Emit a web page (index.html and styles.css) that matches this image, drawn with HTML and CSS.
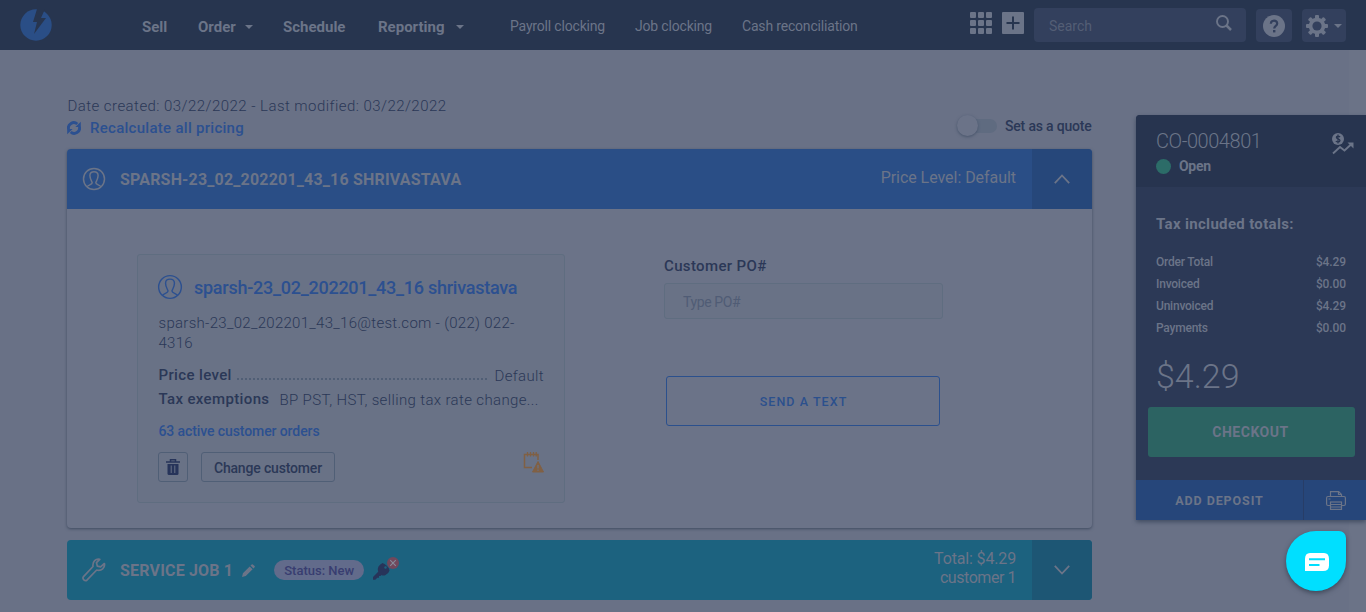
FILE: index.html
```html
<!DOCTYPE html>
<html lang="en">
<head>
<meta charset="utf-8">
<title>CO-0004801</title>
<link rel="stylesheet" href="styles.css">
</head>
<body>
<header class="nav">
  <svg class="logo" viewBox="0 0 32 32"><circle cx="16" cy="16" r="15.7" fill="#2a4e86"/><path d="M17 0 L13 13 L17 13 L14 25 L26 9 L21 9 L25 0 Z" fill="#27354f"/></svg>
  <nav class="menu">
    <a>Sell</a>
    <a>Order</a><i class="caret"></i>
    <a>Schedule</a>
    <a>Reporting</a><i class="caret"></i>
  </nav>
  <nav class="submenu">
    <a>Payroll clocking</a>
    <a>Job clocking</a>
    <a>Cash reconciliation</a>
  </nav>
  <div class="tools">
    <svg class="grid-icon" viewBox="0 0 22 22" fill="#6b7488"><rect width="6" height="6" rx="1"/><rect x="8" width="6" height="6" rx="1"/><rect x="16" width="6" height="6" rx="1"/><rect y="8" width="6" height="6" rx="1"/><rect x="8" y="8" width="6" height="6" rx="1"/><rect x="16" y="8" width="6" height="6" rx="1"/><rect y="16" width="6" height="6" rx="1"/><rect x="8" y="16" width="6" height="6" rx="1"/><rect x="16" y="16" width="6" height="6" rx="1"/></svg>
    <svg class="plus-icon" viewBox="0 0 22 22"><rect width="22" height="22" rx="1" fill="#6b7488"/><path d="M11 4.500v13M4.500 11h13" stroke="#27354f" stroke-width="2"/></svg>
    <div class="search"><span>Search</span>
      <svg width="16" height="16" viewBox="0 0 16 16" fill="none" stroke="#6b7488"><circle cx="6.500" cy="6.500" r="5.500" stroke-width="1.900"/><path d="M10.500 10.500L15 15" stroke-width="2.500"/></svg>
    </div>
    <div class="tool help"><svg width="22" height="22" viewBox="0 0 22 22"><circle cx="11" cy="11" r="11" fill="#6b7488"/><path d="M7.800 8.800C7.900 6.500 9.200 5.600 11 5.600c1.900 0 3.200 1.100 3.200 2.800 0 2.400-3 2.400-3 5" fill="none" stroke="#33405d" stroke-width="2.200"/><rect x="10" y="15" width="2.400" height="2.400" fill="#33405d"/></svg></div>
    <div class="tool gear"><svg width="22" height="22" viewBox="-11 -11 22 22"><g fill="#6b7488"><rect x="-2" y="-11" width="4" height="22" rx="1"/><rect x="-11" y="-2" width="22" height="4" rx="1"/><rect x="-2" y="-11" width="4" height="22" rx="1" transform="rotate(45)"/><rect x="-2" y="-11" width="4" height="22" rx="1" transform="rotate(-45)"/><circle r="8.300"/></g><circle r="4.600" fill="#33405d"/></svg><i class="caret"></i></div>
  </div>
</header>

<div class="page">
  <main class="main">
    <p class="dates">Date created: 03/22/2022 - Last modified: 03/22/2022</p>
    <div class="actions">
      <svg width="14" height="14" viewBox="0 0 14 14" fill="none" stroke="#2c5090" stroke-width="2.900"><path d="M1.600 8.200A5.300 5.300 0 0 1 10.300 3M12.400 5.800A5.300 5.300 0 0 1 3.700 11"/><path d="M13.800 .8V6H8.400ZM.2 13.200V8h5.400Z" fill="#2c5090" stroke="none"/></svg>
      <a class="recalc">Recalculate all pricing</a>
      <span class="toggle"><i class="knob"></i></span>
      <span class="quote">Set as a quote</span>
    </div>

    <section class="panel">
      <div class="bar bar-blue">
        <svg width="24" height="24" viewBox="0 0 24 24" fill="none" stroke="#6b7488" stroke-width="1.500"><circle cx="12" cy="12" r="10.500"/><path d="M5 19.800C6 17.700 10.200 17.800 10.200 15.800 10.200 14.500 7.900 12.500 7.900 8.500 7.900 5.900 9.500 4.700 12 4.700s4.100 1.200 4.100 3.800c0 4-2.300 6-2.300 7.300 0 2 4.200 1.900 5.200 4"/></svg>
        <h2 class="bar-title t-cust">SPARSH-23_02_202201_43_16 SHRIVASTAVA</h2>
        <div class="bar-info"><span class="t-level">Price Level: Default</span></div>
        <div class="chev"><svg width="16" height="10" viewBox="0 0 16 10"><path d="M.8 9.200L8 1.500l7.200 7.700" fill="none" stroke="#6b7488" stroke-width="1.800"/></svg></div>
      </div>
      <div class="panel-body">
        <article class="card">
          <div class="card-head">
            <svg width="26" height="26" viewBox="0 0 24 24" fill="none" stroke="#2c5090" stroke-width="1.300"><circle cx="12" cy="12" r="10.500"/><path d="M5 19.800C6 17.700 10.200 17.800 10.200 15.800 10.200 14.500 7.900 12.500 7.900 8.500 7.900 5.900 9.500 4.700 12 4.700s4.100 1.200 4.100 3.800c0 4-2.300 6-2.300 7.300 0 2 4.200 1.900 5.200 4"/></svg>
            <a class="t-name">sparsh-23_02_202201_43_16 shrivastava</a>
          </div>
          <p class="contact">sparsh-23_02_202201_43_16@test.com - (022) 022-<br>4316</p>
          <div class="row"><b class="t-pl">Price level</b><i class="dots"></i><span class="t-def">Default</span></div>
          <div class="row"><b class="t-tax">Tax exemptions</b><span class="t-bp">BP PST, HST, selling tax rate change...</span></div>
          <a class="orders">63 active customer orders</a>
          <div class="buttons">
            <span class="btn trash"><svg width="14" height="16" viewBox="0 0 14 16"><path d="M4.500 2.500V.8h5v1.700M0 3h14" fill="none" stroke="#27345a" stroke-width="1.500"/><path d="M1.500 5h11v9.500q0 1.500-1.500 1.500H3q-1.500 0-1.500-1.500Z" fill="#27345a"/><path d="M5.200 6.500v7.500M8.800 6.500v7.500" stroke="#697286" stroke-width="1"/></svg></span>
            <span class="btn change"><span>Change customer</span></span>
            <svg class="note" width="21" height="21" viewBox="0 0 21 21"><path d="M15 8V2.500H1.500v13H9" fill="none" stroke="#806044" stroke-width="1.500"/><path d="M4.500 0v4.500M7.500 0v4.500M10.500 0v4.500M13.200 0v4.500" stroke="#806044" stroke-width="1.300"/><path d="M15 9.500L20.500 20H9.500Z" fill="#806044" stroke="#806044" stroke-linejoin="round"/><path d="M15 13v3.500M15 17.500v1.300" stroke="#697286" stroke-width="1.300"/></svg>
          </div>
        </article>
        <div class="po">
          <label class="t-po">Customer PO#</label>
          <div class="input"><span>Type PO#</span></div>
          <div class="send"><span>SEND A TEXT</span></div>
        </div>
      </div>
    </section>

    <section class="bar bar-teal">
      <svg class="wrench" width="24" height="24" viewBox="0 0 24 24" fill="none" stroke="#6b7488" stroke-width="1.700" stroke-linejoin="round"><path d="M17.800 1.300C13.800.4 10.300 3.500 11 8.500L1.300 18.800c-1.200 2.200 1.500 4.700 3.600 3.400L14.700 12c4.800 1.300 8.600-2.300 7.700-6.500l-3.800 3.400-3.300-.8-.8-3.400Z"/></svg>
      <h2 class="bar-title t-job">SERVICE JOB 1</h2>
      <svg class="pencil" width="13" height="13" viewBox="0 0 13 13" fill="#6b7488"><path d="M0 13l.9-3.800L7.700 2.400l2.900 2.900-6.800 6.800ZM8.500 1.600L9.700.4Q10.300-.1 10.900.4L12.600 2.100q.5.600 0 1.200l-1.200 1.200Z"/></svg>
      <span class="status"><span>Status: New</span></span>
      <span class="key"><svg width="17" height="17" viewBox="0 0 17 17"><path d="M9.500 0Q11.500.5 13.500 2.500 16.500 5 16.500 7.500 15.500 11 12.500 12 10.500 13 8.500 12L7.500 13H6v1.700H4.300L2.300 16.800H0V14L5.200 8.800Q4 6 5.500 3.500 7 1 9.500 0Z" fill="#27345a"/><circle cx="12.500" cy="4.500" r="1.200" fill="#1c627f"/></svg>
        <svg class="key-x" width="12" height="12" viewBox="0 0 12 12"><circle cx="6" cy="6" r="6" fill="#70485c"/><path d="M3.200 3.200l5.600 5.600M8.800 3.200L3.200 8.800" stroke="#858a9a" stroke-width="1.100"/></svg></span>
      <div class="bar-info"><span class="t-total">Total: $4.29</span><span class="t-c1">customer 1</span></div>
      <div class="chev"><svg width="16" height="10" viewBox="0 0 16 10"><path d="M.8 .8L8 8.500 15.200 .8" fill="none" stroke="#6b7488" stroke-width="1.800"/></svg></div>
    </section>
  </main>

  <aside class="side">
    <div class="side-head">
      <div><div class="t-co">CO-0004801</div>
        <div class="open"><i></i><b>Open</b></div></div>
      <svg width="22" height="22" viewBox="0 0 22 22"><circle cx="6" cy="6" r="6" fill="#6b7488"/><path d="M8.200 3.900Q6 2.500 4.500 3.800C3.600 5.800 8 5.500 8 7.500 7.500 9.500 5 9.200 3.800 8.100M6 1.500v9" fill="none" stroke="#27344f" stroke-width="1.200"/><path d="M1 20.500L8 14l4.500 3.500L19 11.500" fill="none" stroke="#6b7488" stroke-width="1.900"/><path d="M15.500 9.500H21.500V15.500Z" fill="#6b7488"/></svg>
    </div>
    <div class="side-body">
      <h3 class="t-tot">Tax included totals:</h3>
      <dl class="totals">
        <dt>Order Total</dt><dd>$4.29</dd>
        <dt>Invoiced</dt><dd>$0.00</dd>
        <dt>Uninvoiced</dt><dd>$4.29</dd>
        <dt>Payments</dt><dd>$0.00</dd>
      </dl>
      <div class="amount">$4.29</div>
      <div class="checkout"><span>CHECKOUT</span></div>
    </div>
    <div class="side-foot">
      <div class="deposit"><span>ADD DEPOSIT</span></div>
      <div class="print"><svg width="20" height="19" viewBox="0 0 20 19" fill="none" stroke="#6b7488" stroke-width="1.200"><path d="M4.500 5V.6h8.200L15.500 3.400V5M12.500.8v2.700h3M4.500 14.500H2Q.6 14.500.6 13V7Q.6 5.500 2 5.500H18Q19.400 5.500 19.400 7v6q0 1.500-1.400 1.500H15.500"/><rect x="4.500" y="11" width="11" height="7.400"/><path d="M4.500 13.500h11M4.500 16h11M2.500 8h2"/></svg></div>
    </div>
  </aside>
</div>
<div class="chat"><svg width="24" height="18" viewBox="0 0 24 18"><path d="M5 0H19Q24 0 24 6v6.500Q24 18 18 18H0V6Q0 0 5 0Z" fill="#fff"/><path d="M4 6.200h16M4 12h10.500" stroke="#00dfff" stroke-width="1.900"/></svg></div>
</body>
</html>
```
FILE: styles.css
```css
* { box-sizing: border-box; }
body { margin: 0; height: 612px; overflow: hidden; background: #697186; color: #2b3857; font-family: Roboto, "Liberation Sans", sans-serif; font-size: 15px; }
h2, h3, p, dl, dd { margin: 0; }
a, span, b, h2, h3, label, dt, dd, .amount, .t-co { white-space: nowrap; }
svg { display: block; flex: none; }
b, label { font-weight: 500; }

.nav { display: flex; height: 50px; background: #27354f; color: #6b7488; }
.logo { width: 32px; height: 32px; margin: 9px 0 0 20px; }
.menu { display: grid; grid-template-columns: 56px 47px 38px 95px 78px 54px; width: 368px; margin-left: 90px; height: 54px; align-items: center; font-weight: 700; font-size: 15px; }
.submenu { display: grid; grid-template-columns: 125px 107px 228px; height: 51px; align-items: center; font-size: 14px; letter-spacing: -.18px; }
.caret { display: block; width: 0; height: 0; border: 4px solid transparent; border-top-color: #6b7488; border-bottom: 0; }
.tools { display: flex; align-items: flex-start; }
.grid-icon { width: 22px; height: 22px; margin-top: 12px; }
.plus-icon { width: 22px; height: 22px; margin: 12px 10px 0 10px; }
.search { display: flex; justify-content: space-between; width: 212px; height: 34px; margin-top: 8px; padding: 7px 14px 0 15px; border-radius: 4px; background: #33405d; color: #535e75; font-size: 14px; }
.search span { margin-top: 3px; }
.tool { display: flex; align-items: center; justify-content: center; height: 33px; margin: 9px 0 0 10px; border-radius: 4px; background: #33405d; }
.help { width: 36px; }
.gear { width: 44px; gap: 6px; padding-right: 1px; }

.page { display: flex; gap: 44px; height: 562px; padding-left: 67px; background: linear-gradient(90deg, #697186 1349px, #6b7387 1349px); }
.main { display: flex; flex-direction: column; width: 1025px; padding-top: 46px; }
.dates { height: 20px; padding-left: .5px; line-height: 20px; font-weight: 300; font-size: 15px; letter-spacing: .45px; }
.actions { display: flex; align-items: center; height: 23px; }
.recalc { flex: none; width: 867px; margin-left: 9px; color: #2c5090; font-weight: 500; letter-spacing: .28px; }
.toggle { position: relative; flex: none; width: 40px; height: 21px; margin-top: -4px; padding: 4px 0 0 6px; }
.toggle::before { content: ""; display: block; width: 34px; height: 14px; border-radius: 7px; background: #5f6b80; }
.knob { position: absolute; left: 0; top: 0; width: 21px; height: 21px; border-radius: 50%; background: #6b7388; box-shadow: 0 1px 3px #46536a; }
.quote { margin: -4px 0 0 8px; font-size: 14px; font-weight: 500; letter-spacing: -.18px; }

.panel { height: 379px; margin-top: 10px; border-radius: 4px; background: #6b7388; box-shadow: 0 1px 3px #3f4b60; }
.bar { display: flex; align-items: center; height: 60px; padding-left: 15px; color: #6b7488; overflow: hidden; }
.bar-blue { border-radius: 4px 4px 0 0; background: #2a4e86; }
.bar-teal { margin-top: 12px; border-radius: 4px; background: #1c627f; }
.bar-title { margin-left: 14px; font-size: 16px; font-weight: 700; letter-spacing: .18px; }
.bar-info { display: flex; flex-direction: column; align-items: flex-end; margin-left: auto; padding: 0 16px 3px 0; font-size: 16px; line-height: 19px; letter-spacing: -.05px; }
.bar-teal .bar-info { padding: 0 16px 4px 0; letter-spacing: -.15px; }
.bar-info .t-c1 { letter-spacing: -.45px; }
.chev { display: flex; align-items: center; justify-content: center; width: 60px; height: 60px; background: #26477a; }
.bar-teal .chev { background: #1d5674; }
.wrench { margin-top: -1px; }

.panel-body { display: flex; padding: 45px 0 0 70px; gap: 99px; }
.card { display: flex; flex-direction: column; width: 428px; height: 249px; padding: 19px 20px 0; border: 1px solid #5f6d80; border-radius: 3px; background: #697286; }
.card-head { display: flex; align-items: center; height: 26px; margin-left: -1px; gap: 11px; color: #2c5090; font-size: 18px; font-weight: 500; letter-spacing: -.26px; }
.contact { height: 40px; margin: 13px 0 10px .5px; line-height: 20px; font-size: 15px; font-weight: 300; letter-spacing: .29px; }
.row { display: flex; height: 24px; line-height: 24px; width: 386px; padding-left: .5px; letter-spacing: .36px; }
.row span { padding-top: 1px; font-weight: 300; }
.dots { flex: 1; height: 2px; margin: 15px 5px 0; background: repeating-linear-gradient(90deg, #505e75 0 2px, transparent 2px 4px); }
.t-def { margin-left: auto; }
.t-bp { margin-left: 10px; }
.orders { height: 20px; margin-top: 10px; padding-left: .5px; line-height: 20px; color: #2c5090; font-size: 14px; font-weight: 500; letter-spacing: -.1px; }
.buttons { display: flex; margin-top: 11px; }
.btn { display: flex; align-items: center; justify-content: center; height: 30px; border: 1px solid #505f76; border-radius: 3px; }
.trash { width: 30px; }
.change { width: 135px; margin-left: 13px; padding-top: 1px; font-size: 14px; font-weight: 500; letter-spacing: -.17px; }
.note { margin-left: 188px; }
.po { display: flex; flex-direction: column; width: 279px; }
.t-po { height: 29px; line-height: 24px; letter-spacing: .36px; }
.input { display: flex; align-items: center; height: 36px; padding: 2px 0 0 18px; border: 1px solid #5f6d80; border-radius: 3px; background: #697286; color: #505c75; font-size: 14px; letter-spacing: -.4px; }
.send { display: flex; align-items: center; justify-content: center; width: 274px; height: 50px; margin: 57px 0 0 2px; border: 1px solid #2b508d; border-radius: 3px; color: #2b508d; font-size: 12.500px; font-weight: 500; letter-spacing: 1.05px; padding-left: 1px; }

.pencil { margin-left: 9px; }
.status { display: flex; align-items: center; justify-content: center; width: 90px; height: 20px; margin-left: 19px; border-radius: 10px; background: #626b8b; color: #383d70; font-size: 13px; font-weight: 500; }
.key { position: relative; width: 26px; height: 21px; padding-top: 3px; margin-left: 9px; }
.key-x { position: absolute; top: -3px; left: 14px; }

.side { width: 230px; height: 405px; margin-top: 65px; border-radius: 4px 0 0 0; overflow: hidden; background: #2c3956; color: #6b7488; box-shadow: 0 2px 4px #414d62; }
.side-head { display: flex; justify-content: space-between; height: 72px; padding: 15px 12px 0 20px; background: #27344f; }
.side-head > svg { margin-top: 3px; }
.t-co { height: 25px; line-height: 22px; font-size: 20px; font-weight: 300; letter-spacing: -.45px; }
.open { display: flex; align-items: center; gap: 8px; height: 22px; font-size: 14px; letter-spacing: -.3px; }
.open i { width: 15px; height: 15px; border-radius: 50%; background: #2c6c68; }
.open b { font-weight: 700; }
.side-body { height: 293px; padding: 27px 12px 0; }
.t-tot { margin-left: 8px; font-size: 15px; line-height: 20px; font-weight: 700; letter-spacing: .33px; }
.totals { display: grid; grid-template-columns: auto auto; justify-content: space-between; grid-auto-rows: 22px; margin-top: 17px; padding: 0 8px; line-height: 22px; font-size: 12px; font-weight: 500; letter-spacing: -.22px; }
.totals dd { text-align: right; letter-spacing: -.1px; }
.amount { height: 55px; margin: 14px 0 0 8px; line-height: 46px; font-size: 34px; font-weight: 300; }
.checkout { display: flex; align-items: center; justify-content: center; width: 207px; height: 50px; border-radius: 3px; background: #2c6362; font-size: 14px; font-weight: 700; letter-spacing: .5px; margin-top: -1px; padding-right: 2px; }
.side-foot { display: flex; height: 40px; background: #26467a; }
.deposit { display: flex; flex: none; align-items: center; justify-content: center; width: 168px; border-right: 1px solid #273d67; font-size: 12.500px; font-weight: 700; letter-spacing: .9px; }
.print { display: flex; flex: none; align-items: center; justify-content: center; width: 64px; }
.chat { position: fixed; left: 1286px; top: 531px; display: flex; align-items: center; justify-content: center; width: 60px; height: 60px; padding: 2px 0 0 2px; border-radius: 30px 7px 30px 30px; background: #00dfff; box-shadow: 0 2px 5px #3d4657; }
```
